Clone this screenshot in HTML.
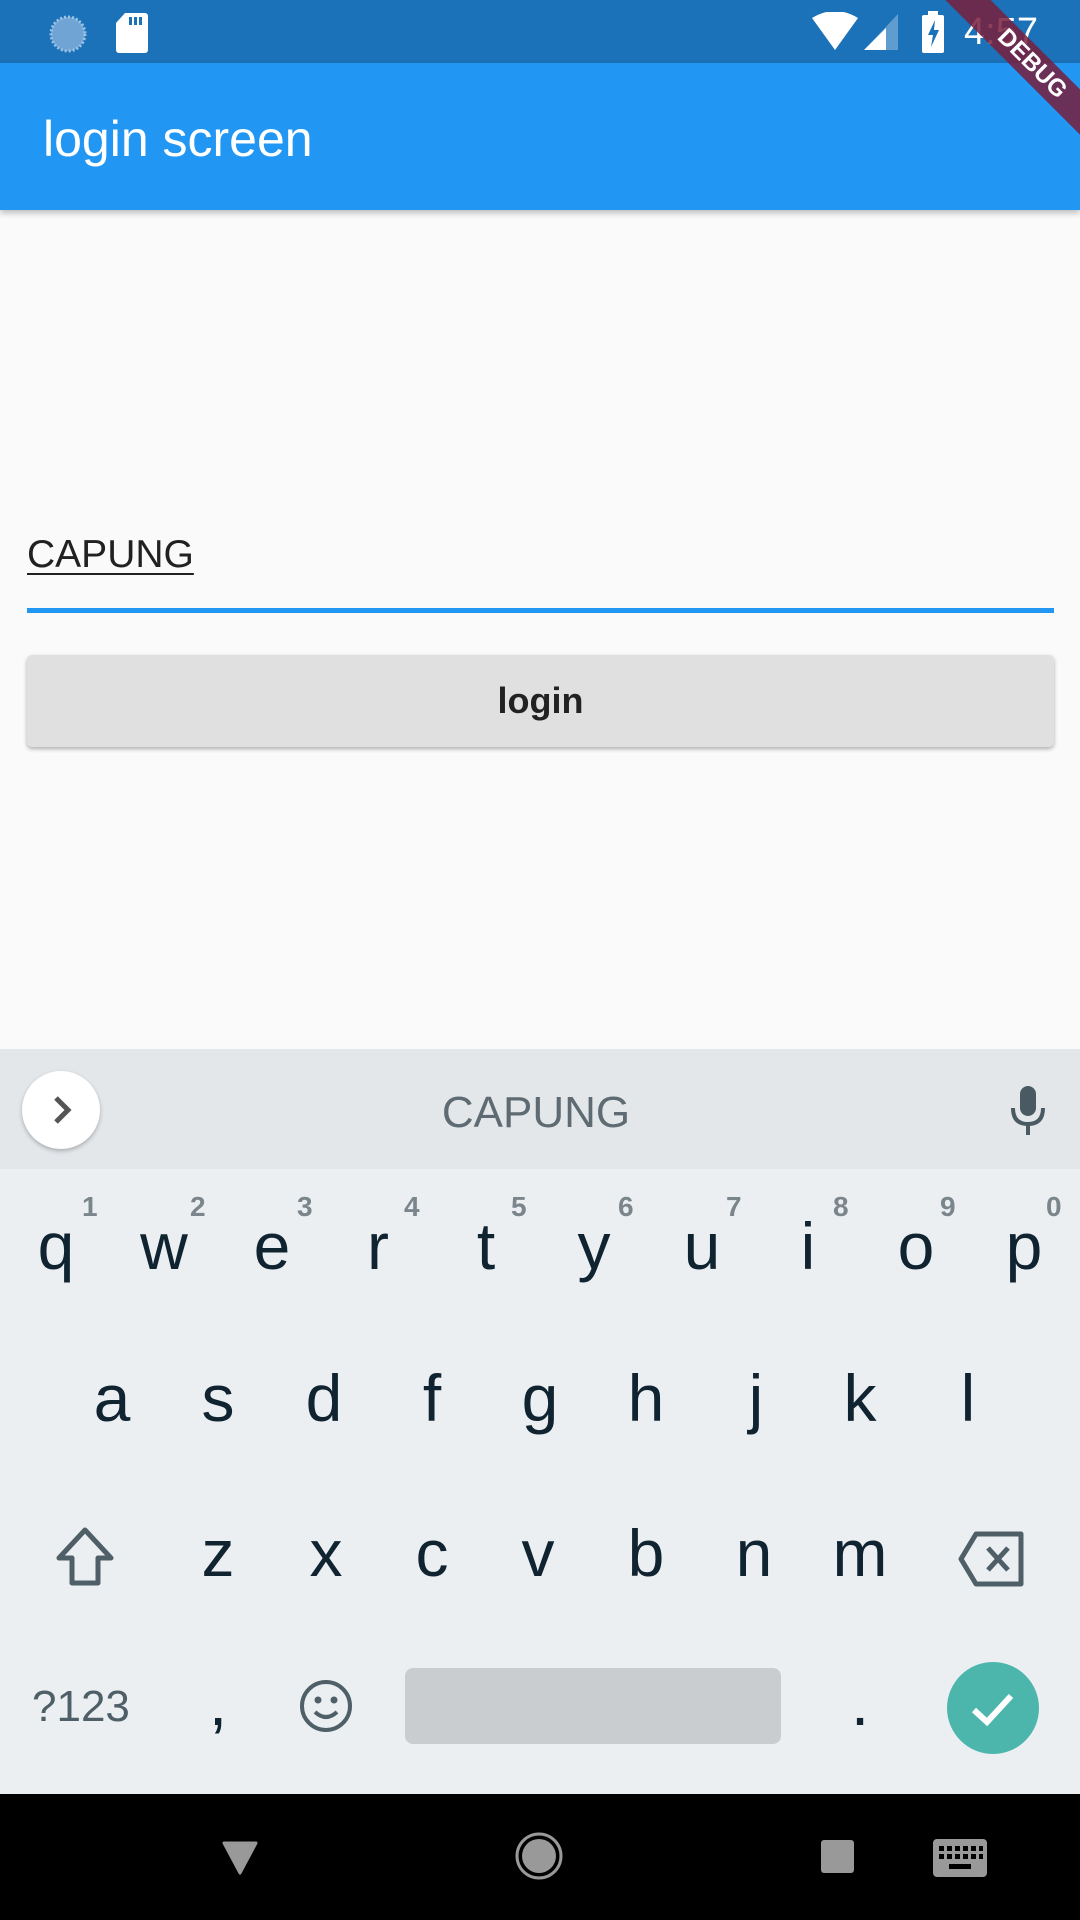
<!DOCTYPE html>
<html><head><meta charset="utf-8"><style>
*{margin:0;padding:0;box-sizing:border-box}
body{width:1080px;height:1920px;overflow:hidden;background:#fafafa;font-family:"Liberation Sans",sans-serif;position:relative}
.abs{position:absolute}
#status{left:0;top:0;width:1080px;height:63px;background:#1b72b9}
#appbar{left:0;top:63px;width:1080px;height:147px;background:#2196f3;box-shadow:0 3px 6px rgba(0,0,0,.25)}
#title{left:43px;top:104px;color:#fff;font-size:50px;line-height:70px}
#time{left:964px;top:10px;color:#fff;font-size:38px;line-height:44px}
#field{left:27px;top:533px;font-size:39px;color:#212121;text-decoration:underline;text-decoration-thickness:2px;text-underline-offset:6px}
#line{left:27px;top:608px;width:1027px;height:5px;background:#2196f3}
#btn{left:27px;top:655px;width:1027px;height:92px;background:#e0e0e0;border-radius:5px;box-shadow:0 2px 4px rgba(0,0,0,.3);text-align:center;line-height:92px;font-size:36px;color:#222;font-weight:bold}
#kb{left:0;top:1049px;width:1080px;height:745px;background:#eceff1}
#strip{left:0;top:1049px;width:1080px;height:120px;background:#e3e7ea}
#nav{left:0;top:1794px;width:1080px;height:126px;background:#000}
.k{position:absolute;width:108px;text-align:center;font-size:66px;color:#102331;line-height:80px}
.n{position:absolute;font-size:28px;color:#7b868c;font-weight:bold}
#banner{left:912px;top:48px;width:240px;height:32px;background:rgba(120,30,60,.85);transform:rotate(45deg);color:#fff;font-weight:bold;font-size:24px;text-align:center;line-height:32px}
</style></head><body>
<div id="status" class="abs"></div>
<svg class="abs" style="left:48px;top:14px" width="40" height="40"><circle cx="20" cy="20" r="17" fill="#6fa4d4" stroke="#9cc3e6" stroke-width="3" stroke-dasharray="2 2"/></svg>
<svg class="abs" style="left:115px;top:13px" width="34" height="40"><path d="M10 0H30a3 3 0 0 1 3 3V37a3 3 0 0 1-3 3H4a3 3 0 0 1-3-3V10Z" fill="#fff"/><rect x="14" y="4" width="3" height="8" fill="#1b72b9"/><rect x="19" y="4" width="3" height="8" fill="#1b72b9"/><rect x="24" y="4" width="3" height="8" fill="#1b72b9"/></svg>
<svg class="abs" style="left:810px;top:12px" width="50" height="40"><path d="M2 6Q25-8 48 6L25 38Z" fill="#fff"/></svg>
<svg class="abs" style="left:864px;top:14px" width="36" height="36"><path d="M34 0V36H0Z" fill="#5f9ccf"/><path d="M22 14V36H0Z" fill="#fff"/></svg>
<svg class="abs" style="left:922px;top:11px" width="22" height="42"><rect x="6" y="0" width="10" height="5" fill="#fff"/><rect x="0" y="4" width="22" height="38" rx="2" fill="#fff"/><path d="M13 9L6 24h5l-2 12 8-17h-5z" fill="#1b72b9"/></svg>
<div id="time" class="abs">4:57</div>
<div id="appbar" class="abs"></div>
<div id="title" class="abs">login screen</div>
<div id="banner" class="abs">DEBUG</div>
<div id="field" class="abs">CAPUNG</div>
<div id="line" class="abs"></div>
<div id="btn" class="abs">login</div>
<div id="kb" class="abs"></div>
<div id="strip" class="abs"></div>
<div class="abs" style="left:22px;top:1071px;width:78px;height:78px;border-radius:50%;background:#fff;box-shadow:0 2px 4px rgba(0,0,0,.25)"></div>
<svg class="abs" style="left:22px;top:1071px" width="78" height="78"><path d="M34 27L46 39L34 51" fill="none" stroke="#555" stroke-width="5"/></svg>
<div class="abs" style="left:-4px;top:1088px;width:1080px;text-align:center;font-size:44px;color:#5f6b72">CAPUNG</div>
<svg class="abs" style="left:1008px;top:1086px" width="40" height="52"><rect x="12" y="0" width="16" height="30" rx="8" fill="#4a5a63"/><path d="M5 22Q5 38 20 38Q35 38 35 22" fill="none" stroke="#4a5a63" stroke-width="4"/><rect x="18" y="37" width="4" height="12" fill="#4a5a63"/></svg>
<!-- row1 -->
<div class="k" style="left:2px;top:1206px">q</div><div class="k" style="left:110px;top:1206px">w</div><div class="k" style="left:218px;top:1206px">e</div><div class="k" style="left:324px;top:1206px">r</div><div class="k" style="left:432px;top:1206px">t</div><div class="k" style="left:540px;top:1206px">y</div><div class="k" style="left:648px;top:1206px">u</div><div class="k" style="left:754px;top:1206px">i</div><div class="k" style="left:862px;top:1206px">o</div><div class="k" style="left:970px;top:1206px">p</div>
<div class="n" style="left:82px;top:1191px">1</div><div class="n" style="left:190px;top:1191px">2</div><div class="n" style="left:297px;top:1191px">3</div><div class="n" style="left:404px;top:1191px">4</div><div class="n" style="left:511px;top:1191px">5</div><div class="n" style="left:618px;top:1191px">6</div><div class="n" style="left:726px;top:1191px">7</div><div class="n" style="left:833px;top:1191px">8</div><div class="n" style="left:940px;top:1191px">9</div><div class="n" style="left:1046px;top:1191px">0</div>
<!-- row2 -->
<div class="k" style="left:58px;top:1358px">a</div><div class="k" style="left:164px;top:1358px">s</div><div class="k" style="left:270px;top:1358px">d</div><div class="k" style="left:378px;top:1358px">f</div><div class="k" style="left:486px;top:1358px">g</div><div class="k" style="left:592px;top:1358px">h</div><div class="k" style="left:702px;top:1358px">j</div><div class="k" style="left:806px;top:1358px">k</div><div class="k" style="left:914px;top:1358px">l</div>
<!-- row3 -->
<svg class="abs" style="left:54px;top:1527px" width="62" height="60"><path d="M31 3L5 31H18V56H44V31H57Z" fill="none" stroke="#4f5f67" stroke-width="5" stroke-linejoin="round"/></svg>
<div class="k" style="left:164px;top:1513px">z</div><div class="k" style="left:272px;top:1513px">x</div><div class="k" style="left:378px;top:1513px">c</div><div class="k" style="left:484px;top:1513px">v</div><div class="k" style="left:592px;top:1513px">b</div><div class="k" style="left:700px;top:1513px">n</div><div class="k" style="left:806px;top:1513px">m</div>
<svg class="abs" style="left:958px;top:1531px" width="68" height="56"><path d="M18 3H63V53H18L3 28Z" fill="none" stroke="#4f5f67" stroke-width="5" stroke-linejoin="round"/><path d="M30 17L50 39M50 17L30 39" stroke="#4f5f67" stroke-width="5"/></svg>
<!-- row4 -->
<div class="abs" style="left:32px;top:1682px;font-size:44px;color:#4f5f67">?123</div>
<div class="k" style="left:164px;top:1662px">,</div>
<svg class="abs" style="left:298px;top:1678px" width="56" height="56"><circle cx="28" cy="28" r="24" fill="none" stroke="#4f5f67" stroke-width="4"/><circle cx="20" cy="22" r="3.5" fill="#4f5f67"/><circle cx="36" cy="22" r="3.5" fill="#4f5f67"/><path d="M17 34Q28 44 39 34" fill="none" stroke="#4f5f67" stroke-width="4"/></svg>
<div class="abs" style="left:405px;top:1668px;width:376px;height:76px;background:#c9cdd0;border-radius:8px"></div>
<div class="k" style="left:806px;top:1662px">.</div>
<div class="abs" style="left:947px;top:1662px;width:92px;height:92px;border-radius:50%;background:#4db6ac"></div>
<svg class="abs" style="left:947px;top:1662px" width="92" height="92"><path d="M27 48L40 60L64 34" fill="none" stroke="#fff" stroke-width="6"/></svg>
<div id="nav" class="abs"></div>
<svg class="abs" style="left:220px;top:1840px" width="40" height="36"><path d="M4 3H36L20 33Z" fill="#999" stroke="#999" stroke-width="3" stroke-linejoin="round"/></svg>
<svg class="abs" style="left:514px;top:1831px" width="50" height="50"><circle cx="25" cy="25" r="22" fill="none" stroke="#999" stroke-width="3"/><circle cx="25" cy="25" r="17" fill="#999"/></svg>
<div class="abs" style="left:821px;top:1840px;width:33px;height:33px;background:#999;border-radius:3px"></div>
<svg class="abs" style="left:933px;top:1839px" width="54" height="38"><rect width="54" height="38" rx="4" fill="#999"/><g fill="#000"><rect x="6" y="7" width="5" height="5"/><rect x="14" y="7" width="5" height="5"/><rect x="22" y="7" width="5" height="5"/><rect x="30" y="7" width="5" height="5"/><rect x="38" y="7" width="5" height="5"/><rect x="46" y="7" width="4" height="5"/><rect x="6" y="15" width="5" height="5"/><rect x="14" y="15" width="5" height="5"/><rect x="22" y="15" width="5" height="5"/><rect x="30" y="15" width="5" height="5"/><rect x="38" y="15" width="5" height="5"/><rect x="46" y="15" width="4" height="5"/><rect x="16" y="25" width="22" height="5"/></g></svg>
</body></html>
